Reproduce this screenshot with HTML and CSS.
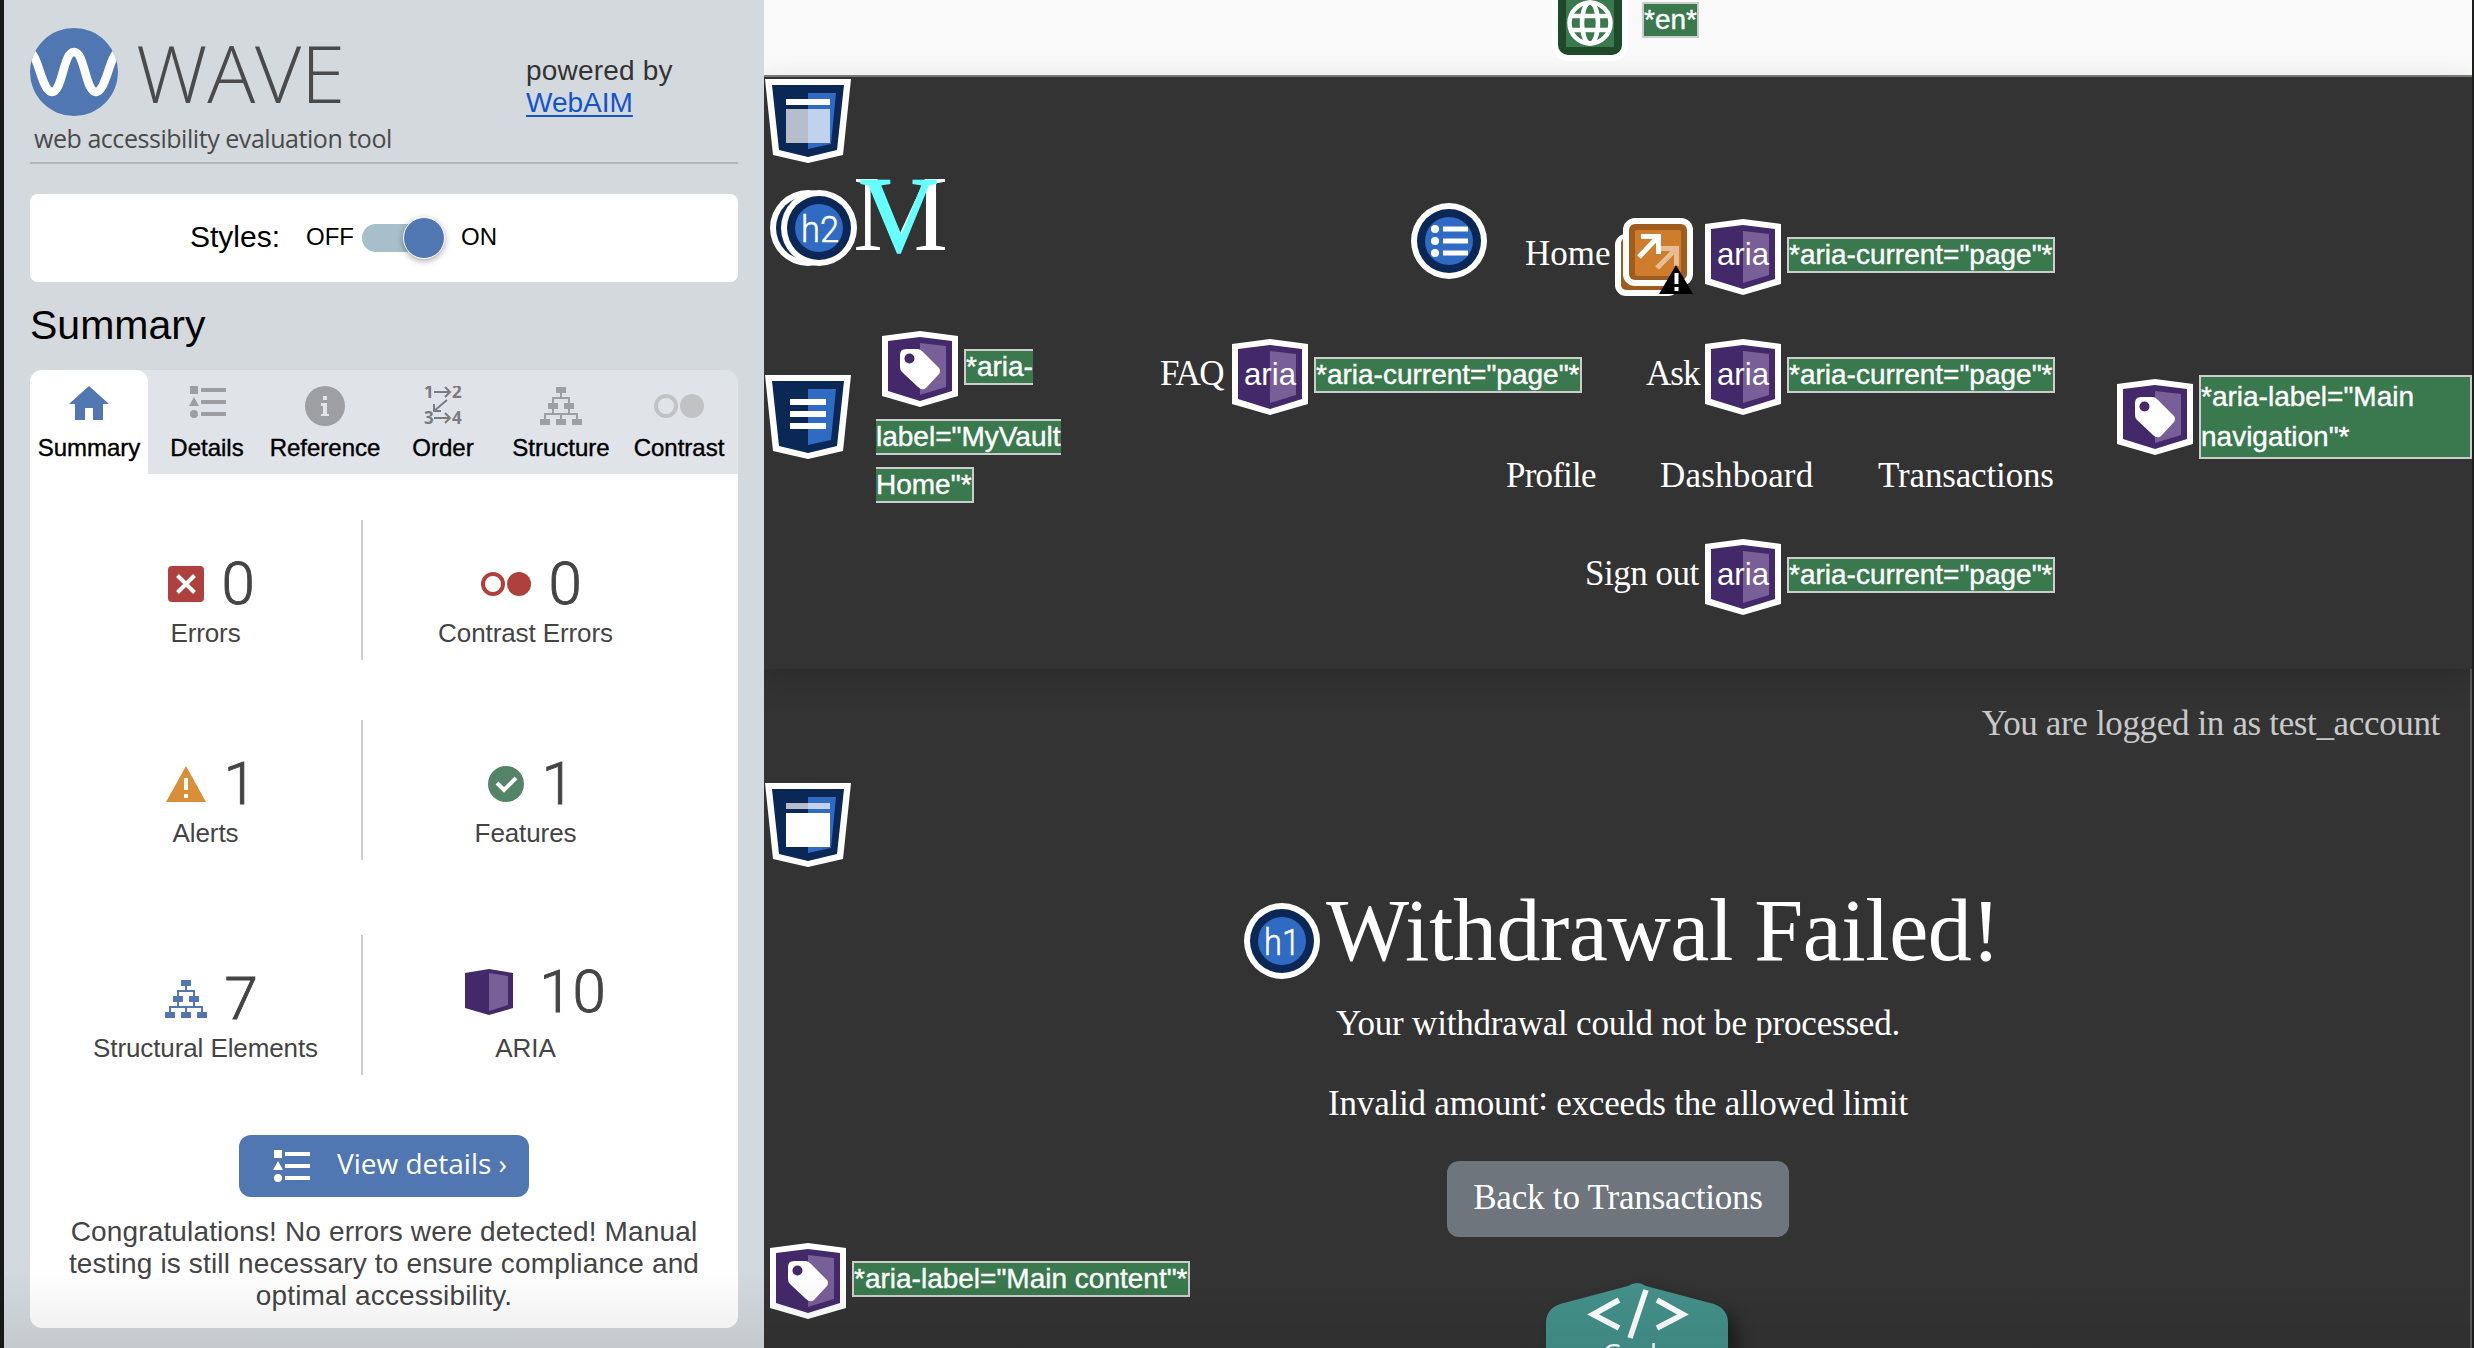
FILE: index.html
```html
<!DOCTYPE html>
<html lang="en">
<head>
<meta charset="utf-8">
<title>WAVE report - Withdrawal Failed</title>
<link rel="stylesheet" href="styles.css">
</head>
<body>
<svg class="defs" width="0" height="0">
  <symbol id="circle" viewBox="0 0 76 76"><circle cx="38" cy="38" r="38" fill="#fff"/><circle cx="38" cy="38" r="32" fill="#0a2756"/><circle cx="38" cy="38" r="24" fill="#2f6ac3"/></symbol>
  <symbol id="shield" viewBox="0 0 86 84"><path d="M0 0H86L78 76L43 84L8 76Z" fill="#fff"/><path d="M7 6H79L72 71L43 78L14 71Z" fill="#0a2756"/><path d="M43 14H71L66 65L43 70Z" fill="#2f6ac3"/></symbol>
  <symbol id="box" viewBox="0 0 76 76"><path d="M0 5L38 0L76 5V65L38 76L0 65Z" fill="#fff"/><path d="M6 10L38 6L70 10V60L38 70L6 60Z" fill="#432969"/><path d="M38 12L64 15V56L38 64Z" fill="#785f98"/></symbol>
  <symbol id="aria" viewBox="0 0 76 76"><use href="#box"/><text class="aria-text" x="12" y="46" textLength="52" lengthAdjust="spacingAndGlyphs">aria</text></symbol>
  <symbol id="tag" viewBox="0 0 76 76"><use href="#box"/><path d="M18 24Q18 18 24 18H36Q38 18 41 21L57 37Q59 40 57 43L44 57Q40 60 36 56L20 41Q18 39 18 36Z" fill="#fff"/><circle cx="27.500" cy="27.500" r="5" fill="#432969"/></symbol>
  <symbol id="list" viewBox="0 0 37 32"><path d="M1 0h8v8H1zM5 11l5 9H0zM12 2h25v4H12zM12 14h25v4H12zM12 26h25v4H12z"/><circle cx="5" cy="28" r="4"/></symbol>
  <symbol id="tree" viewBox="0 0 42 38"><path d="M16 0h10v6H16zM8 16h10v6H8zM24 16h10v6H24zM0 32h10v6H0zM16 32h10v6H16zM32 32h10v6H32z"/><path d="M21 6v5M13 16v-5h16v5M13 22v5M29 22v5M5 32v-5h32v5M21 27v5" fill="none" stroke="currentColor" stroke-width="2"/></symbol>
  <symbol id="contrast" viewBox="0 0 50 24"><circle cx="12" cy="12" r="10" fill="none" stroke="currentColor" stroke-width="4"/><circle cx="38" cy="12" r="12"/></symbol>
</svg>
<div class="app">
  <aside class="sidebar">
    <header class="top">
      <div class="title">
        <div class="logo">
          <svg width="88" height="88" viewBox="0 0 88 88"><defs><clipPath id="lc"><circle cx="44" cy="44" r="44"/></clipPath></defs><circle cx="44" cy="44" r="44" fill="#5077b1"/><path clip-path="url(#lc)" d="M-2 24C8 22 11 63 22 64C33 63 33 24 44 24C55 24 55 63 66 64C77 63 80 22 90 24" fill="none" stroke="#fff" stroke-width="8.500"/></svg>
          <span class="wave">WAVE</span>
        </div>
        <p class="tagline">web accessibility evaluation tool</p>
      </div>
      <p class="powered">powered by<br><a href="#">WebAIM</a></p>
    </header>
    <section class="styles-card"><span class="styles-label">Styles:</span><span>OFF</span><span class="toggle"><i></i></span><span>ON</span></section>
    <h2 class="summary">Summary</h2>
    <nav class="tabs">
      <div class="tab active"><svg width="40" height="34" viewBox="0 0 40 34"><path d="M20 0L40 18H34V34H24V22H16V34H6V18H0Z" fill="#5077b1"/></svg><span>Summary</span></div>
      <div class="tab"><svg class="grey" width="37" height="32"><use href="#list"/></svg><span>Details</span></div>
      <div class="tab"><svg class="grey" width="40" height="40" viewBox="0 0 40 40"><circle cx="20" cy="20" r="20"/><path d="M18 10h4v4h-4zM16 17h6v11h2v2h-8v-2h2v-8h-2z" fill="#e0e4e9"/></svg><span>Reference</span></div>
      <div class="tab"><svg class="order" width="40" height="40" viewBox="0 0 40 40"><text x="1" y="12">1</text><text x="29" y="12">2</text><text x="1" y="38">3</text><text x="29" y="38">4</text><path d="M11 6H27M22 1l5 5-5 5M11 32H27M22 27l5 5-5 5M24 14L11 25M11 18v7h7" fill="none" stroke="#7b7c7f" stroke-width="2"/></svg><span>Order</span></div>
      <div class="tab"><svg class="grey" width="42" height="38"><use href="#tree"/></svg><span>Structure</span></div>
      <div class="tab"><svg class="pale" width="50" height="24"><use href="#contrast"/></svg><span>Contrast</span></div>
    </nav>
    <section class="panel">
      <div class="stats">
        <div class="stat"><div class="count"><svg width="36" height="36" viewBox="0 0 36 36"><rect width="36" height="36" rx="4" fill="#ae413e"/><path d="M9.500 9.500L26.500 26.500M26.500 9.500L9.500 26.500" stroke="#fff" stroke-width="4"/></svg><b>0</b></div><span>Errors</span></div>
        <div class="stat"><div class="count"><svg class="red" width="50" height="24"><use href="#contrast"/></svg><b>0</b></div><span>Contrast Errors</span></div>
        <div class="stat"><div class="count"><svg width="40" height="36" viewBox="0 0 40 36"><path d="M20 0L40 36H0Z" fill="#d98f38"/><path d="M18 12h4v12h-4zM18 28h4v4h-4z" fill="#fff"/></svg><b>1</b></div><span>Alerts</span></div>
        <div class="stat"><div class="count"><svg width="36" height="36" viewBox="0 0 36 36"><circle cx="18" cy="18" r="18" fill="#548368"/><path d="M9 17L16 24L28 12" fill="none" stroke="#fff" stroke-width="4"/></svg><b>1</b></div><span>Features</span></div>
        <div class="stat"><div class="count"><svg class="blue" width="42" height="38"><use href="#tree"/></svg><b>7</b></div><span>Structural Elements</span></div>
        <div class="stat"><div class="count raised"><svg width="48" height="46" viewBox="0 0 48 46"><path d="M0 4L24 0L48 4V39L24 46L0 39Z" fill="#432969"/><path d="M24 4L43 7V36L24 42Z" fill="#785f98"/></svg><b>10</b></div><span>ARIA</span></div>
      </div>
      <div class="view"><svg class="white" width="37" height="32"><use href="#list"/></svg><span>View details ›</span></div>
      <p class="congrats">Congratulations! No errors were detected! Manual<br>testing is still necessary to ensure compliance and<br>optimal accessibility.</p>
    </section>
  </aside>
  <main class="page">
    <div class="language">
      <svg class="globe" width="76" height="76" viewBox="0 0 76 76"><rect width="76" height="76" rx="15" fill="#fff"/><rect x="6" y="6" width="64" height="64" rx="10" fill="#1f4a2a"/><rect x="14" y="14" width="48" height="48" fill="#39794d"/><g fill="none" stroke="#fff" stroke-width="4.500"><circle cx="38" cy="38" r="20.500"/><ellipse cx="38" cy="38" rx="8" ry="20.500"/><path d="M20 31H56M20 45H56"/></g></svg>
      <span class="label">*en*</span>
    </div>
    <div class="site-header">
      <div class="brand">
        <svg class="landmark" width="86" height="84" viewBox="0 0 86 84"><use href="#shield"/><path d="M21 20h44v6H21z" fill="#fff"/><path d="M21 30h44v34H21z" fill="#fff" opacity=".7"/></svg>
        <div class="brand-row">
          <svg width="88" height="76" viewBox="0 0 88 76"><use href="#circle" width="76" height="76"/><use href="#circle" x="11" width="76" height="76"/><text class="badge-text" x="31" y="52" textLength="38" lengthAdjust="spacingAndGlyphs">h2</text></svg>
          <svg class="monogram" width="100" height="80" viewBox="0 0 100 80"><text x="-1" y="72" fill="#fff">M</text><text x="6" y="73" fill="#6ff" stroke="#6ff" stroke-width="1.500">V</text></svg>
        </div>
        <div class="home-row">
          <svg class="nav-mark" width="86" height="84" viewBox="0 0 86 84"><use href="#shield"/><path d="M25 24h36v6H25zM25 36h36v6H25zM25 48h36v6H25z" fill="#fff"/></svg>
          <div class="home-label">
            <div class="first"><svg width="76" height="76"><use href="#tag"/></svg><span class="label open-end">*aria-</span></div>
            <span class="label open-both">label="MyVault</span>
            <span class="label open-start">Home"*</span>
          </div>
        </div>
      </div>
      <nav class="links">
        <div class="row">
          <svg class="list-mark" width="76" height="76" viewBox="0 0 76 76"><use href="#circle"/><g fill="#fff"><circle cx="24" cy="26" r="4"/><circle cx="24" cy="38" r="4"/><circle cx="24" cy="50" r="4"/><path d="M32 23.500h25v5H32zM32 35.500h25v5H32zM32 47.500h25v5H32z"/></g></svg>
          <a class="home">Home</a>
          <svg class="popup" width="78" height="78" viewBox="0 0 78 78"><rect y="16" width="64" height="62" rx="11" fill="#fff"/><rect x="6" y="20" width="54" height="52" rx="5" fill="#9f5c1f"/><rect x="8" width="70" height="68" rx="12" fill="#fff"/><rect x="14" y="6" width="58" height="56" rx="6" fill="#9f5c1f"/><rect x="20" y="12" width="46" height="46" rx="2" fill="#cf7c2c"/><path d="M42 50L59 33M44 30.500H61.500V48" fill="none" stroke="#e6bd94" stroke-width="5"/><path d="M24 39L41 21M26 18.500H43.500V36" fill="none" stroke="#fff" stroke-width="5"/><path d="M61 47L78 76H44Z"/><path d="M59.500 55h4v11h-4zM59.500 69h4v4h-4z" fill="#fff"/></svg>
          <svg class="mark after-popup" width="76" height="76"><use href="#aria"/></svg><span class="label">*aria-current="page"*</span>
        </div>
        <div class="row">
          <a class="faq">FAQ</a><svg class="mark" width="76" height="76"><use href="#aria"/></svg><span class="label">*aria-current="page"*</span>
          <a class="ask">Ask</a><svg class="mark" width="76" height="76"><use href="#aria"/></svg><span class="label">*aria-current="page"*</span>
        </div>
        <div class="row text-row"><a class="profile">Profile</a><a class="dashboard">Dashboard</a><a class="transactions">Transactions</a></div>
        <div class="row"><a class="signout">Sign out</a><svg class="mark" width="76" height="76"><use href="#aria"/></svg><span class="label">*aria-current="page"*</span></div>
      </nav>
      <div class="nav-label"><svg width="76" height="76"><use href="#tag"/></svg><span class="label tall">*aria-label="Main navigation"*</span></div>
    </div>
    <p class="logged">You are logged in as test_account</p>
    <div class="content">
      <svg class="main-mark" width="86" height="84" viewBox="0 0 86 84"><use href="#shield"/><path d="M21 20h44v6H21z" fill="#fff" opacity=".7"/><path d="M21 30h44v34H21z" fill="#fff"/></svg>
      <div class="headline"><svg width="76" height="76" viewBox="0 0 76 76"><use href="#circle"/><text class="badge-text" x="20" y="52" textLength="36" lengthAdjust="spacingAndGlyphs">h1</text></svg><h1>Withdrawal Failed!</h1></div>
      <p class="message">Your withdrawal could not be processed.</p>
      <p class="reason">Invalid amount<span class="colon">:</span> exceeds the allowed limit</p>
      <a class="back">Back to Transactions</a>
      <div class="main-label"><svg width="76" height="76"><use href="#tag"/></svg><span class="label">*aria-label="Main content"*</span></div>
    </div>
    <svg class="code" width="182" height="65" viewBox="0 0 182 65"><path d="M82 3Q91 -3 100 3L168 21Q182 26 182 40V65H0V40Q0 26 14 21Z" fill="#44918b"/><path d="M73 17L47 31.500L73 45M111 17L137 31.500L111 45M100 7L84 55" fill="none" stroke="#fff" stroke-width="5.500"/><text x="56" y="82">Code</text></svg>
  </main>
</div>
</body>
</html>
```
FILE: styles.css
```css
* { box-sizing: border-box; margin: 0; padding: 0; }
body { width: 2474px; height: 1348px; overflow: hidden; font-family: "Liberation Sans", Arial, sans-serif; background: #333; }
svg { display: block; flex: none; }
.defs { position: absolute; }
.app { display: flex; height: 1348px; position: relative; }
.app::after { content: ""; position: absolute; inset: auto 0 0 0; height: 80px; background: linear-gradient(rgba(0,0,0,0), rgba(0,0,0,.07)); pointer-events: none; }

.sidebar { width: 764px; height: 1348px; border-left: 4px solid #181a1a; padding: 28px 26px 20px; background: #d4d9dd; flex: none; }
.top { display: flex; justify-content: space-between; height: 136px; border-bottom: 2px solid #b0b7bc; }
.logo { display: flex; gap: 18px; height: 88px; }
.wave { font: 300 80px/88px "Open Sans", sans-serif; color: #4a4a4a; letter-spacing: -.2px; }
.tagline { font: 25px/34px "Open Sans", sans-serif; color: #4a4a4a; margin: 5px 0 0 4px; letter-spacing: -.45px; white-space: nowrap; }
.powered { width: 212px; padding-top: 27px; font-size: 28px; line-height: 32px; color: #333; letter-spacing: .2px; }
.powered a { color: #1155cc; text-underline-offset: 3px; text-decoration-thickness: 2px; letter-spacing: 0; }
.styles-card { display: flex; align-items: center; height: 88px; margin-top: 30px; padding: 0 0 3px 160px; border-radius: 8px; background: #fff; font-size: 24px; }
.styles-label { font-size: 30px; margin-right: 26px; }
.toggle { width: 78px; height: 28px; border-radius: 14px; background: #a7bfca; margin: 3px 21px 0 8px; display: flex; align-items: center; justify-content: flex-end; }
.toggle i { width: 42px; height: 42px; border-radius: 50%; border: 1.5px solid #fff; background: #5077b1; box-shadow: 0 2px 6px rgba(0,0,0,.35); margin-right: -5px; flex: none; }
.summary { font-size: 41px; font-weight: 400; line-height: 48px; margin-top: 19px; height: 69px; }
.tabs { display: grid; grid-template-columns: repeat(6, 118px); height: 104px; background: #e0e4e9; border-radius: 12px 12px 0 0; }
.tab { display: grid; grid-template-rows: 40px 28px; row-gap: 8px; padding-top: 16px; place-items: center; align-content: start; font-size: 24px; line-height: 28px; -webkit-text-stroke: .4px #000; }
.tab.active { background: #fff; border-radius: 12px 12px 0 0; }
.tab svg { -webkit-text-stroke: 0; }
.tab.active svg, .tab:nth-child(2) svg { align-self: start; }
.grey { fill: #9d9fa3; color: #9d9fa3; }
.pale { fill: #c1c2c4; color: #c1c2c4; }
.red { fill: #ae413e; color: #ae413e; }
.blue { fill: #5077b1; color: #5077b1; }
.white { fill: #fff; }
.order text { font: bold 17px "Open Sans", sans-serif; fill: #7b7c7f; }
.panel { height: 854px; background: #fff; border-radius: 0 0 12px 12px; padding-top: 46px; display: flex; flex-direction: column; align-items: center; }
.stats { display: grid; grid-template-columns: 333px 333px; grid-template-rows: 140px 140px 140px; width: 708px; row-gap: 60px; height: 615px; }
.stat { display: flex; flex-direction: column; align-items: center; padding-top: 29px; font-size: 26px; line-height: 30px; color: #444; letter-spacing: -.1px; }
.stat:nth-child(n+5) { position: relative; top: 15px; }
.stat:nth-child(odd) { border-right: 2px solid #ccc; padding-left: 20px; }
.stat:nth-child(even) { padding-right: 8px; }
.count { display: flex; align-items: center; height: 70px; gap: 17px; padding-left: 12px; margin-bottom: -1px; }
.count b { font: 300 60px/70px Roboto, sans-serif; -webkit-text-stroke: .9px #444; }
.raised { position: relative; top: -7px; gap: 26px; padding-left: 20px; }
.view { width: 290px; height: 62px; border-radius: 12px; background: #5077b1; color: #fff; display: flex; align-items: center; padding-left: 34px; gap: 27px; font: 28px/54px "Open Sans", sans-serif; white-space: nowrap; flex: none; }
.view span { height: 60px; }
.congrats { margin-top: 19px; text-align: center; font-size: 28px; line-height: 32px; color: #444; letter-spacing: .15px; }

.page { width: 1710px; height: 1348px; position: relative; background: #333; border-right: 2px solid #1d1d1d; box-shadow: inset -2px 0 #5a5a5a; color: #fff; font-family: "Liberation Serif", serif; font-size: 35px; overflow: hidden; }
.language { height: 77px; background: #f9f9f9; border-bottom: 2px solid #788078; display: flex; padding-left: 788px; align-items: flex-start; }
.globe { margin-top: -15px; }
.label { display: block; height: 36px; line-height: 32px; border: 2px solid #ccc; background: #39794d; color: #fff; font-family: "Liberation Sans", Arial, sans-serif; font-size: 28px; white-space: nowrap; -webkit-text-stroke: .4px #fff; }
.language .label { margin: 2px 0 0 14px; }
.site-header { height: 592px; display: flex; background: #333; box-shadow: 0 10px 30px rgba(0,0,0,.18); }
.brand { width: 330px; flex: none; }
.landmark { margin: 2px 0 15px 1px; }
.brand-row { display: flex; align-items: flex-end; height: 88px; padding-left: 6px; }
.monogram { align-self: flex-start; margin-left: -4px; font-family: "Liberation Serif", serif; font-size: 107px; }
.badge-text { font: 300 36px Roboto, sans-serif; fill: #fff; stroke: #fff; stroke-width: .5px; }
.aria-text { font: 32px "Liberation Sans", sans-serif; fill: #fff; }
.home-row { display: flex; }
.nav-mark { margin: 109px 25px 0 1px; }
.home-label { margin-top: 65px; display: flex; flex-direction: column; align-items: flex-start; gap: 12px; }
.first { display: flex; gap: 6px; padding-left: 6px; align-items: center; }
.first .label { margin-bottom: 4px; }
.open-end { border-right: 0; }
.open-both { border-left: 0; border-right: 0; }
.open-start { border-left: 0; }
.links { width: 961px; padding-top: 142px; flex: none; }
.row { display: flex; justify-content: flex-end; align-items: center; height: 76px; margin-bottom: 44px; line-height: 40px; }
.row a { margin-bottom: 6px; white-space: nowrap; }
.row .label { margin: 0 0 4px 6px; width: 268px; }
.row:nth-child(2) { margin-bottom: 26px; }
.text-row { margin-bottom: 22px; }
.mark { margin-left: 6px; }
.list-mark { margin: -32px 38px 0 0; }
.home { width: 86px; }
.popup { margin-left: 4px; }
.after-popup { margin-left: 12px; }
.faq { width: 66px; letter-spacing: -1.4px; }
.ask { width: 53px; margin-left: 64px; letter-spacing: -1px; }
.profile { width: 90px; letter-spacing: -.8px; }
.dashboard { width: 154px; margin-left: 64px; letter-spacing: .2px; }
.transactions { width: 177px; margin-left: 64px; letter-spacing: -.15px; }
.signout { width: 114px; letter-spacing: -.5px; }
.nav-label { display: flex; gap: 6px; padding: 298px 0 0 62px; align-items: flex-start; }
.nav-label svg { margin-top: 4px; }
.label.tall { width: 273px; height: 84px; line-height: 40px; white-space: normal; }
.logged { padding: 35px 32px 0 0; text-align: right; line-height: 40px; color: #c9c9c9; letter-spacing: -.35px; height: 114px; }
.content { display: flex; flex-direction: column; align-items: center; }
.main-mark { align-self: flex-start; margin-left: 1px; }
.headline { display: flex; align-items: flex-end; gap: 6px; height: 100px; margin: 13px 0 0 -3px; }
.headline svg { margin-bottom: 1px; }
.headline h1 { font-weight: 400; font-size: 88px; line-height: 100px; letter-spacing: -.5px; width: 663px; white-space: nowrap; position: relative; top: 1px; }
.message, .reason { line-height: 40px; letter-spacing: -.2px; }
.message { margin-top: 24px; }
.reason { margin-top: 40px; }
.colon { position: relative; top: -5px; }
.back { margin-top: 37px; width: 342px; height: 76px; border-radius: 12px; background: #6e757d; text-align: center; line-height: 74px; letter-spacing: -.2px; }
.main-label { align-self: flex-start; display: flex; gap: 6px; align-items: center; padding: 0 0 0 6px; margin-top: 6px; }
.main-label .label { margin-bottom: 4px; }
.code { position: absolute; left: 782px; top: 1283px; filter: drop-shadow(10px 10px 8px rgba(0,0,0,.4)); }
.code text { font: 30px "Open Sans", sans-serif; fill: #fff; }
```
